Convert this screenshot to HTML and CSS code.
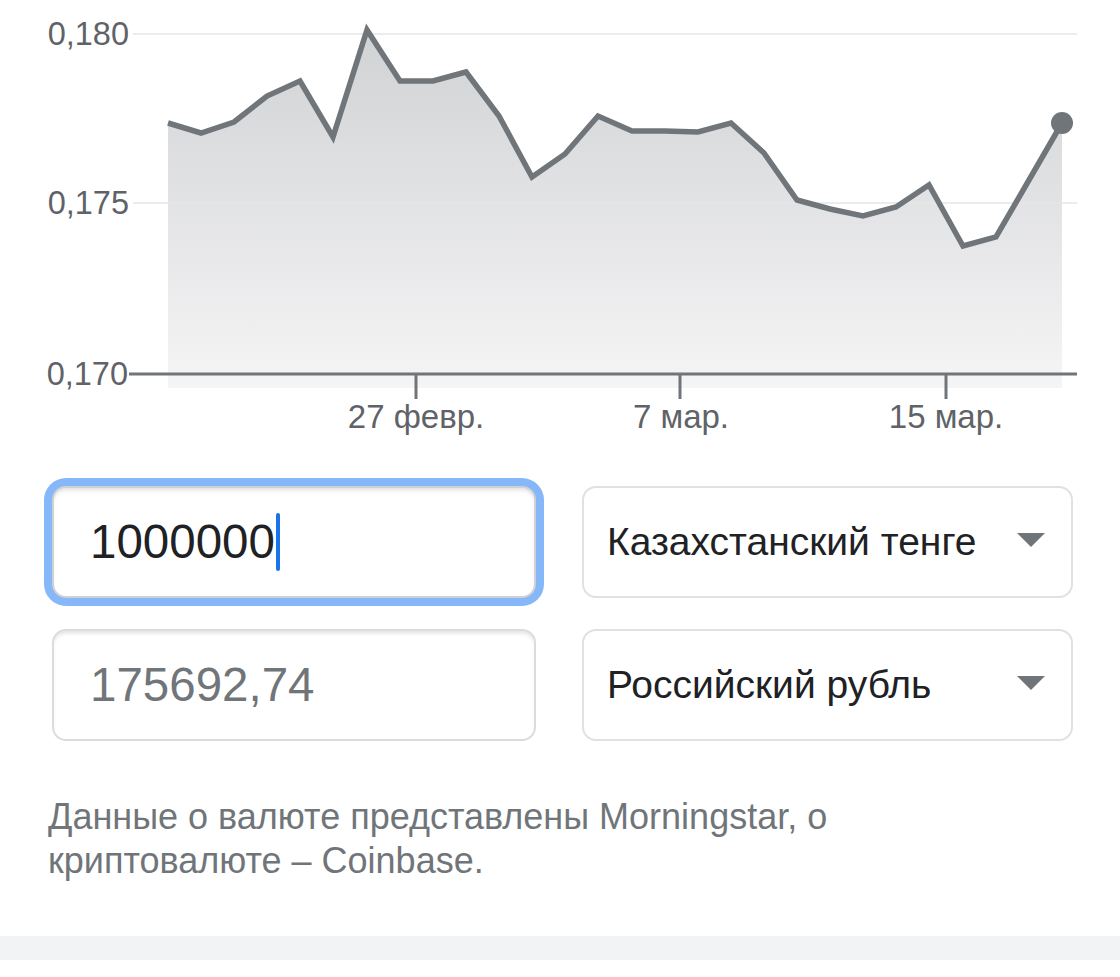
FILE: index.html
```html
<!DOCTYPE html>
<html lang="ru">
<head>
<meta charset="utf-8">
<title>Конвертер валют</title>
<link rel="stylesheet" href="styles.css">
</head>
<body>
<div class="page">
  <svg class="chart" width="1120" height="455" viewBox="0 0 1120 455" xmlns="http://www.w3.org/2000/svg">
    <defs>
      <linearGradient id="area" x1="0" y1="30" x2="0" y2="388" gradientUnits="userSpaceOnUse">
        <stop offset="0" stop-color="#d1d2d4"/>
        <stop offset="1" stop-color="#f5f5f6"/>
      </linearGradient>
    </defs>
    <line class="grid" x1="133" y1="34" x2="1077" y2="34"/>
    <line class="grid" x1="133" y1="203" x2="1077" y2="203"/>
    <polygon fill="url(#area)" points="168,123 201,133 234,122 267,96 300,81 333,137 367,30 400,81 433,81 466,72 499,116 532,177 565,154 598,116 632,131 665,131 698,132 731,123 764,153 797,200 830,209 863,216 896,207 929,185 963,246 996,237 1029,180 1062,123 1062,388 168,388"/>
    <line class="grid" x1="168" y1="203" x2="1062" y2="203" opacity="0.35"/>
    <polyline class="line" points="168,123 201,133 234,122 267,96 300,81 333,137 367,30 400,81 433,81 466,72 499,116 532,177 565,154 598,116 632,131 665,131 698,132 731,123 764,153 797,200 830,209 863,216 896,207 929,185 963,246 996,237 1029,180 1062,123"/>
    <circle cx="1062" cy="123" r="11" fill="#70757a"/>
    <line class="axis" x1="129" y1="374" x2="1077" y2="374"/>
    <line class="axis" x1="416" y1="374" x2="416" y2="399"/>
    <line class="axis" x1="680" y1="374" x2="680" y2="399"/>
    <line class="axis" x1="946" y1="374" x2="946" y2="399"/>
    <text class="ylabel" x="129" y="45">0,180</text>
    <text class="ylabel" x="129" y="214">0,175</text>
    <text class="ylabel" x="128" y="385">0,170</text>
    <text class="xlabel" x="416" y="428">27 февр.</text>
    <text class="xlabel" x="681" y="428">7 мар.</text>
    <text class="xlabel" x="946" y="428">15 мар.</text>
  </svg>

  <div class="converter">
    <div class="field field-focused">
      <span class="value">1000000</span><span class="caret"></span>
    </div>
    <div class="select">
      <span class="select-label">Казахстанский тенге</span>
      <svg class="arrow" width="28" height="14" viewBox="0 0 28 14"><polygon points="0,0 28,0 14,14"/></svg>
    </div>
    <div class="field">
      <span class="value value-muted">175692,74</span>
    </div>
    <div class="select">
      <span class="select-label">Российский рубль</span>
      <svg class="arrow" width="28" height="14" viewBox="0 0 28 14"><polygon points="0,0 28,0 14,14"/></svg>
    </div>
  </div>

  <p class="source">Данные о валюте представлены Morningstar, о<br>криптовалюте – Coinbase.</p>

  <div class="strip"></div>
</div>
</body>
</html>
```

FILE: styles.css
```css
html, body {
  margin: 0;
  padding: 0;
  background: #ffffff;
}

body {
  font-family: "Liberation Sans", Arial, "Noto Sans", sans-serif;
  color: #202124;
}

.page {
  width: 1120px;
}

.chart {
  display: block;
}

.chart .grid {
  stroke: #ececec;
  stroke-width: 2;
}

.chart .line {
  fill: none;
  stroke: #70757a;
  stroke-width: 5.5;
  stroke-linejoin: miter;
}

.chart .axis {
  stroke: #70757a;
  stroke-width: 3;
}

.chart .ylabel,
.chart .xlabel {
  font-family: "Liberation Sans", Arial, sans-serif;
  font-size: 32.5px;
  fill: #5f6368;
}

.chart .ylabel {
  text-anchor: end;
}

.chart .xlabel {
  text-anchor: middle;
  font-size: 33px;
}

.converter {
  display: grid;
  grid-template-columns: 484px 491px;
  grid-auto-rows: 112px;
  column-gap: 46px;
  row-gap: 31px;
  padding: 31px 0 0 52px;
}

.field {
  box-sizing: border-box;
  display: flex;
  align-items: center;
  padding-left: 36px;
  border: 2px solid #dadce0;
  border-radius: 14px;
  box-shadow: inset 0 4px 4px -2px rgba(0, 0, 0, 0.13);
  background: #fff;
}

.field-focused {
  border-color: #cfd1d4;
  box-shadow: 0 0 0 8px #86b7f8, inset 0 4px 4px -2px rgba(0, 0, 0, 0.13);
}

.value {
  font-size: 47.5px;
  color: #202124;
  line-height: 1;
}

.value-muted {
  color: #70757a;
}

.caret {
  display: block;
  width: 4px;
  height: 58px;
  margin-left: 1px;
  border-radius: 2px;
  background: #1a73e8;
}

.select {
  box-sizing: border-box;
  display: flex;
  align-items: center;
  justify-content: space-between;
  padding: 0 26px 0 23px;
  border: 2px solid #e0e1e3;
  border-radius: 14px;
  background: #fff;
}

.select-label {
  font-size: 39px;
  color: #202124;
}

.arrow {
  display: block;
  margin-top: -4px;
}

.arrow polygon {
  fill: #70757a;
}

.source {
  margin: 54px 0 0 0;
  padding-left: 48px;
  font-size: 36px;
  line-height: 44px;
  color: #70757a;
}

.strip {
  margin-top: 53px;
  height: 24px;
  background: #f1f3f4;
}
```
